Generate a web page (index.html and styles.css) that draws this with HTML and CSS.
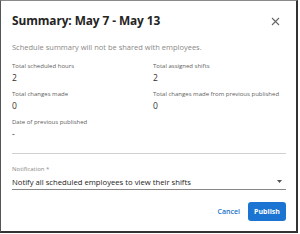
FILE: index.html
```html
<!DOCTYPE html>
<html>
<head>
<meta charset="utf-8">
<link rel="stylesheet" href="styles.css">
</head>
<body>
<div class="dialog">
  <div class="header">
    <h1 class="title">Summary: May 7 - May 13</h1>
    <svg class="close" width="9" height="9" viewBox="0 0 9 9"><path d="M1 1L8 8M8 1L1 8" stroke="#666" stroke-width="1.1" fill="none"/></svg>
  </div>
  <p class="note">Schedule summary will not be shared with employees.</p>
  <div class="stats">
    <div class="stat"><div class="label">Total scheduled hours</div><div class="value">2</div></div>
    <div class="stat"><div class="label">Total assigned shifts</div><div class="value">2</div></div>
    <div class="stat"><div class="label">Total changes made</div><div class="value">0</div></div>
    <div class="stat"><div class="label">Total changes made from previous published</div><div class="value">0</div></div>
    <div class="stat"><div class="label">Date of previous published</div><div class="value">-</div></div>
  </div>
  <div class="divider"></div>
  <div class="field">
    <div class="field-label">Notification *</div>
    <div class="select"><span>Notify all scheduled employees to view their shifts</span><svg width="5" height="3" viewBox="0 0 5 3"><path d="M0 0H5L2.5 3Z" fill="#555"/></svg></div>
  </div>
  <div class="actions">
    <button class="cancel">Cancel</button>
    <button class="publish">Publish</button>
  </div>
</div>
</body>
</html>
```
FILE: styles.css
```css
html, body { margin: 0; padding: 0; background: #fff; }
body { width: 300px; height: 234px; font-family: "Open Sans", "Noto Sans", sans-serif; color: #252423; }
.dialog {
  box-sizing: border-box;
  width: 298px; height: 233px;
  border-top: 1px solid #8a8a8a;
  border-left: 1px solid #555;
  border-right: 2px solid #333;
  border-bottom: 2px solid #333;
  padding: 0 10px 0 11px;
  display: flex; flex-direction: column;
}
.header { display: flex; align-items: center; justify-content: space-between; height: 38px; padding-right: 6px; }
.title { margin: 0; font-size: 11.9px; font-weight: 700; letter-spacing: -0.1px; }
.close { display: block; margin-top: 2px; }
.note { margin: 2px 0 0; font-size: 7.5px; color: #8a8886; line-height: 12px; }
.stats { display: grid; grid-template-columns: 141px 1fr; margin-top: 8px; row-gap: 4px; }
.label { font-size: 6px; color: #605e5c; line-height: 10px; }
.value { font-size: 8.5px; line-height: 14px; color: #323130; }
.divider { height: 1px; background: #d2d0ce; margin-top: 12px; }
.field { margin-top: 10px; }
.field-label { font-size: 6px; color: #8a8886; line-height: 10px; }
.select { display: flex; align-items: center; justify-content: space-between; border-bottom: 1px solid #8a8886; height: 15px; font-size: 7.7px; color: #252423; padding-right: 4px; }
.actions { display: flex; justify-content: flex-end; align-items: center; gap: 8px; margin-top: 12px; }
button { font-family: inherit; border: 0; background: none; padding: 0; cursor: pointer; }
.cancel { color: #1a73c8; font-size: 7px; font-weight: 600; }
.publish { background: #1b74d2; color: #fff; font-size: 7px; font-weight: 700; width: 38px; height: 19px; border-radius: 3px; }
```
